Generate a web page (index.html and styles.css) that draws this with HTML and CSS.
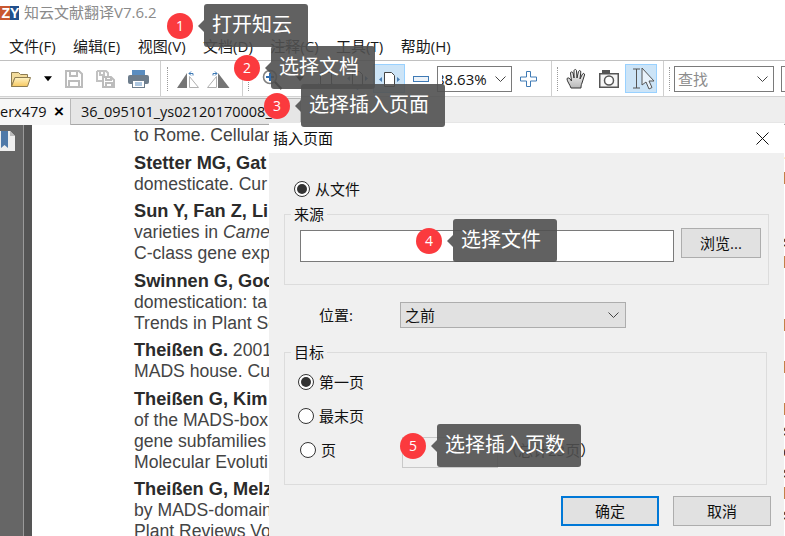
FILE: index.html
```html
<!DOCTYPE html>
<html lang="zh">
<head>
<meta charset="utf-8">
<title>知云文献翻译</title>
<link rel="stylesheet" href="styles.css">
</head>
<body>
<div class="app">
  <header class="titlebar">
    <div class="logo"><span class="logo-z">Z</span><span class="logo-y">Y</span></div>
    <span class="app-title">知云文献翻译V7.6.2</span>
  </header>
  <nav class="menubar">
    <span>文件(F)</span><span>编辑(E)</span><span>视图(V)</span><span>文档(D)</span><span>注释(C)</span><span>工具(T)</span><span>帮助(H)</span>
  </nav>
  <div class="toolbar">
    <div class="group g-file">
      <svg width="20" height="18" viewBox="0 0 20 18"><defs><linearGradient id="fold" x1="0" y1="0" x2="0" y2="1"><stop offset="0" stop-color="#fff3c4"/><stop offset="1" stop-color="#f6c860"/></linearGradient></defs><path d="M.5 2.500h7l2 2h7v3H4L.5 16.500z" fill="#f3dc9c" stroke="#8d7c52"/><path d="M.5 16.500 4 7.500h15.500l-3 9z" fill="url(#fold)" stroke="#8d7c52"/></svg>
      <svg class="caret" width="8" height="6" viewBox="0 0 9 6"><path d="M0 0h9L4.500 5.500z" fill="#000"/></svg>
      <svg width="18" height="18" viewBox="0 0 18 18"><path d="M1 1h13l3 3v13H1zM5 1v5h7V1M4 17v-6h10v6" fill="none" stroke="#bcbcbc" stroke-width="2"/></svg>
      <svg width="19" height="18" viewBox="0 0 19 18"><path d="M1 1h9l2 2v3M1 1v10h5M4 1v4h4V1" fill="none" stroke="#c2c2c2" stroke-width="2"/><path d="M7 7h8l3 3v7H7zM10 7v3h5V7M10 17v-4h6v4" fill="none" stroke="#bcbcbc" stroke-width="2"/></svg>
      <svg width="21" height="19" viewBox="0 0 21 19"><rect x="4" y="1" width="13" height="6" fill="#5a8dc0"/><rect y="6" width="21" height="9" rx="2" fill="#6d7d8c"/><rect x="4.500" y="11.500" width="12" height="7" fill="#fff" stroke="#6d7d8c"/><path d="M7 14h7M7 16h7" stroke="#5a8dc0"/></svg>
    </div>
    <i class="divider d-a"></i><i class="grip"></i>
    <div class="group g-rotate">
      <svg width="26" height="20" viewBox="0 0 26 20"><path d="M11 4v15H1z" fill="#757575"/><path d="M13.500 7.500v11h9z" fill="none" stroke="#b0b0b0"/><path d="M17 4.500h-4M15 2.500l-2 2 2 2M17 4.500v2" fill="none" stroke="#3f7ab5"/></svg>
      <svg width="23" height="20" viewBox="0 0 23 20"><path d="M11 4v15H22.500z" fill="#757575"/><path d="M9.500 7.500v11h-9z" fill="none" stroke="#b0b0b0"/><path d="M6 4.500h4M8 2.500l2 2-2 2M6 4.500v2" fill="none" stroke="#3f7ab5"/></svg>
    </div>
    <i class="divider d-b"></i><i class="grip g-tight"></i>
    <div class="group g-zoom">
      <svg width="20" height="22" viewBox="0 0 20 22"><circle cx="8" cy="9" r="6.500" fill="#fff" stroke="#808080" stroke-width="1.600"/><path d="M8 5v8M4 9h8" stroke="#2f6db0" stroke-width="2"/><path d="M13 14l6.500 7" stroke="#222" stroke-width="2.200"/></svg>
      <svg class="caret" width="8" height="6" viewBox="0 0 9 6"><path d="M0 0h9L4.500 5.500z" fill="#000"/></svg>
      <svg width="15" height="20" viewBox="0 0 15 20"><path d="M2.500 3.500h11v12h-11z" fill="#fff" stroke="#444"/><path d="M0 14v4h4M15 14v4h-4" fill="none" stroke="#5a8dc0"/></svg>
      <svg width="21" height="22" viewBox="0 0 21 22"><path d="M5.500 3.500h7l3 3v11h-10z" fill="#fff" stroke="#444"/><path d="M3 8v5l-3-2.500zM18 8v5l3-2.500zM8 20h5l-2.500 2z" fill="#4a7fb5"/></svg>
    </div>
    <div class="group g-page">
      <span class="tool-on"><svg width="21" height="20" viewBox="0 0 21 20"><path d="M5.500 3.500h7l3 3v11h-10z" fill="#fff" stroke="#444"/><path d="M3 8v5l-3-2.500zM18 8v5l3-2.500z" fill="#4a7fb5"/></svg></span>
      <svg width="16" height="6" viewBox="0 0 16 6"><rect x=".5" y=".5" width="15" height="5" fill="#edf3f9" stroke="#3f7ab5"/></svg>
      <div class="combo zoom-combo"><span class="zoom-clip"><span class="zoom-value">88.63%</span></span><svg class="chev" width="11" height="6" viewBox="0 0 11 6"><path d="M.5.500l5 5 5-5" fill="none" stroke="#444"/></svg></div>
      <svg width="17" height="16" viewBox="0 0 17 16"><path d="M6.500.500h4v5.500h6v4h-6v5.500h-4V10h-6V6h6z" fill="#fff" stroke="#3f7ab5"/></svg>
    </div>
    <i class="divider d-c"></i><i class="grip g-tight"></i>
    <div class="group g-hand">
      <svg width="21" height="21" viewBox="0 0 21 21"><defs><linearGradient id="handfill" x1="0" y1="0" x2="0" y2="1"><stop offset="0" stop-color="#fff"/><stop offset="1" stop-color="#b8b8b8"/></linearGradient></defs><path d="M5 20C4 17 1 13 1 11c0-1.500 2-1.500 3 0l1.500 2L4.500 5c0-1.500 2-1.500 2.500 0L8 10V3c0-2 2.500-2 2.500 0l.5 7 1.500-6.500c.5-1.500 2.500-1 2.300.5L14 11l2.500-5c.7-1.200 2.500-.5 2 1L16 15c-1 2-1 4-1 5z" fill="url(#handfill)" stroke="#333"/></svg>
      <svg width="20" height="18" viewBox="0 0 20 18"><rect x="3" width="8" height="4" fill="#555"/><rect x=".75" y="3.750" width="18.500" height="13.500" fill="#f6f6f6" stroke="#555" stroke-width="1.500"/><circle cx="10" cy="10.500" r="4.500" fill="#fff" stroke="#555" stroke-width="1.500"/></svg>
    </div>
    <span class="tool-on tool-select"><svg width="30" height="27" viewBox="0 0 30 27"><path d="M7 4h7M10.500 4v19M7 23h7" fill="none" stroke="#555"/><path d="M16 3v17l4-3 3 7 3-1.500-3-6.500h5z" fill="#e8f2fb" stroke="#555"/></svg></span>
    <i class="divider d-d"></i><i class="grip g-tight"></i>
    <div class="combo find-combo"><span class="find-text">查找</span><svg class="chev" width="11" height="6" viewBox="0 0 11 6"><path d="M.5.500l5 5 5-5" fill="none" stroke="#444"/></svg></div>
    <div class="combo last-combo"></div>
  </div>
  <div class="tabbar">
    <div class="tab tab-active"><span>erx479</span><b class="tab-close">×</b></div>
    <div class="tab tab-other">36_095101_ys02120170008_w</div>
  </div>
  <main class="workspace">
    <aside class="sidebar">
      <svg width="15" height="20" viewBox="0 0 15 20"><path d="M0 0h10l5 5v15H0z" fill="#eee"/><path d="M10 0l5 5h-5z" fill="#bbb"/><path d="M1 0h7v17l-3.500-3L1 17z" fill="#4f79a8"/></svg>
    </aside>
    <i class="gutter"></i>
    <section class="page">
      <div class="refs">
        <p>to Rome. Cellular</p>
        <p><b>Stetter MG, Gat</b><br>domesticate. Cur</p>
        <p><b>Sun Y, Fan Z, Li</b><br>varieties in <em>Came</em><br>C-class gene exp</p>
        <p><b>Swinnen G, Goo</b><br>domestication: ta<br>Trends in Plant Sc</p>
        <p><b>Theißen G.</b> 2001<br>MADS house. Cu</p>
        <p><b>Theißen G, Kim</b><br>of the MADS-box<br>gene subfamilies<br>Molecular Evoluti</p>
        <p><b>Theißen G, Melz</b><br>by MADS-domain<br>Plant Reviews Vo</p>
      </div>
      <div class="refs-next">·<br>D<br>&nbsp;<br>&nbsp;<br>s<br>E<br>&nbsp;<br>&nbsp;<br>D<br>&nbsp;<br>D<br>&nbsp;<br>D<br>s<br>c<br>s<br>D<br>s</div>
    </section>
  </main>

  <div class="dialog">
    <div class="dlg-title"><span>插入页面</span><svg width="13" height="13" viewBox="0 0 13 13"><path d="M.5.500l12 12M12.500.500l-12 12" stroke="#111" fill="none"/></svg></div>
    <div class="dlg-body">
      <label class="from-file"><i class="radio radio-on"></i>从文件</label>
      <fieldset class="box box-source">
        <legend>来源</legend>
        <div class="source-row">
          <div class="text-input"></div>
          <button class="btn btn-browse">浏览...</button>
        </div>
      </fieldset>
      <div class="pos-row">
        <span class="pos-label">位置:</span>
        <div class="pos-select"><span>之前</span><svg width="11" height="6" viewBox="0 0 11 6"><path d="M.5.500l5 5 5-5" fill="none" stroke="#444"/></svg></div>
      </div>
      <fieldset class="box box-target">
        <legend>目标</legend>
        <div class="opts">
          <label class="opt"><i class="radio radio-on"></i>第一页</label>
          <label class="opt"><i class="radio"></i>最末页</label>
          <label class="opt opt-page"><i class="radio"></i>页<span class="page-input"></span><span class="page-total">（总计23页）</span></label>
        </div>
      </fieldset>
      <div class="actions">
        <button class="btn btn-action btn-primary">确定</button>
        <button class="btn btn-action">取消</button>
      </div>
    </div>
  </div>

  <div class="hint hint-1"><span class="badge">1</span><span class="bubble">打开知云</span></div>
  <div class="hint hint-2"><span class="badge">2</span><span class="bubble">选择文档</span></div>
  <div class="hint hint-3"><span class="badge">3</span><span class="bubble">选择插入页面</span></div>
  <div class="hint hint-4"><span class="badge">4</span><span class="bubble">选择文件</span></div>
  <div class="hint hint-5"><span class="badge">5</span><span class="bubble">选择插入页数</span></div>
</div>
</body>
</html>
```
FILE: styles.css
```css
* { box-sizing: border-box; }
html, body { margin: 0; padding: 0; }
body { background: #fff; color: #111; font: 15px/20px "Open Sans", "Noto Sans CJK SC", sans-serif; }
i { display: block; font-style: normal; }
.app { position: relative; width: 785px; height: 536px; overflow: hidden; display: flex; flex-direction: column; }

.titlebar { height: 33px; display: flex; align-items: flex-start; padding-top: 6px; }
.logo { width: 19px; height: 14px; display: flex; overflow: hidden; font: bold 14px/14px "Liberation Sans", sans-serif; color: #fff; }
.logo-z { width: 10px; background: #c9572f; text-align: right; }
.logo-y { width: 9px; background: #214f8c; text-align: center; }
.app-title { margin: -4px 0 0 5px; font-size: 15px; line-height: 20px; color: #8a8a8a; }

.menubar { height: 28px; display: flex; gap: 17.500px; padding: 3px 0 0 9px; border-bottom: 1px solid #c0c0c0; white-space: nowrap; color: #1a1a1a; }

.toolbar { height: 36px; display: flex; align-items: center; padding-left: 11px; border-bottom: 1px solid #d2d2d2; flex: none; }
.group { display: flex; align-items: center; flex: none; }
.g-file { gap: 13px; }
.g-rotate { gap: 5px; margin-left: 8px; }
.g-zoom { gap: 14px; margin-left: 13px; }
.g-page { gap: 8px; margin-left: 5px; }
.g-hand { gap: 12px; margin-left: 8px; }
.divider { width: 1px; align-self: stretch; background: #cfcfcf; flex: none; }
.d-a { margin-left: 11px; }
.d-b { margin-left: 12px; }
.d-c { margin-left: 14px; }
.d-d { margin-left: 6px; }
.grip { width: 1px; height: 24px; margin-left: 6px; border-left: 1px dotted #9a9a9a; flex: none; }
.g-tight { margin-left: 5px; }
.tool-on { width: 32px; height: 29px; flex: none; display: flex; align-items: center; justify-content: center; background: #cce4f7; border: 1px solid #99d1ff; }
.tool-select { margin-left: 6px; }
.combo { height: 26px; flex: none; display: flex; align-items: center; justify-content: space-between; border: 1px solid #7a7a7a; background: #fff; overflow: hidden; }
.zoom-combo { width: 75px; padding-right: 5px; }
.zoom-clip { display: block; width: 47px; margin-left: 4px; overflow: hidden; white-space: nowrap; }
.zoom-value { display: block; margin-left: -6px; font-size: 15px; color: #111; }
.find-combo { width: 100px; margin-left: 4px; padding: 0 5px 0 3px; }
.find-text { color: #8c8c8c; font-size: 15px; }
.last-combo { width: 30px; margin-left: 7px; }

.tabbar { height: 28px; display: flex; background: #eee; border-bottom: 1px solid #a8a8a8; padding-top: 1px; flex: none; white-space: nowrap; font-size: 14.500px; }
.tab { display: flex; align-items: center; border-top: 1px solid #b8b8b8; border-right: 1px solid #b8b8b8; margin-bottom: -1px; }
.tab-active { width: 71px; background: #f7f7f7; justify-content: space-between; padding-right: 6px; }
.tab-close { font: bold 17px/20px "Liberation Sans", sans-serif; color: #000; }
.tab-other { width: 230px; padding-left: 10px; background: #e6e6e6; border-bottom: 1px solid #a8a8a8; color: #111; }

.workspace { flex: 1; min-height: 0; display: flex; overflow: hidden; }
.sidebar { width: 24px; flex: none; background: #666; border-right: 1px solid #9a9a9a; padding-top: 6px; }
.sidebar svg { display: block; }
.gutter { width: 8px; flex: none; background: #555; }
.page { flex: 1; background: #fff; display: flex; padding-left: 102px; overflow: hidden; }
.refs { width: 649px; flex: none; font: 17.600px/21px "Liberation Sans", sans-serif; color: #444; white-space: nowrap; }
.refs p { margin: 0 0 6.500px; }
.refs b { color: #2b2b2b; font-size: 18.200px; line-height: 0; }
.refs-next { padding-top: 22px; font: 17.300px/21px "Liberation Sans", sans-serif; color: #333; white-space: nowrap; opacity: .99; }

.dialog { position: absolute; left: 269px; top: 122px; width: 515px; height: 414px; background: #f0f0f0; border-top: 1px solid #e6e6e6; color: #111; }
.dlg-title { height: 30px; background: #fff; display: flex; align-items: center; justify-content: space-between; padding: 0 15px 0 4px; }
.dlg-body { padding: 28px 0 0 15px; }
.radio { width: 16px; height: 16px; flex: none; border: 1px solid #333; border-radius: 50%; background: #fff; position: relative; }
.radio-on::after { content: ""; position: absolute; inset: 2px; border-radius: 50%; background: #333; }
.from-file { display: flex; align-items: center; gap: 5px; height: 16px; padding-left: 10px; }
.box { margin: 7px 0 0; padding: 0; border: 1px solid #dcdcdc; min-width: 0; }
.box legend { margin-left: 6px; padding: 0 3px; line-height: 20px; }
.box-source { width: 485px; height: 81px; }
.source-row { display: flex; align-items: flex-start; gap: 7px; padding: 4px 0 0 15px; }
.text-input { width: 374px; height: 32px; margin-top: 2px; background: #fff; border: 1px solid #7a7a7a; }
.btn { display: block; padding: 0; font: inherit; color: #111; background: #e1e1e1; border: 1px solid #adadad; }
.btn-browse { width: 80px; height: 30px; }
.pos-row { display: flex; align-items: center; height: 26px; margin-top: 17px; padding-left: 35px; }
.pos-label { width: 81px; }
.pos-select { width: 226px; height: 26px; display: flex; align-items: center; justify-content: space-between; padding: 0 6px 0 4px; background: #e1e1e1; border: 1px solid #adadad; }
.box-target { width: 483px; height: 143px; margin-top: 14px; }
.opts { padding: 3px 0 0 13px; }
.opt { display: flex; align-items: center; gap: 5px; height: 34px; }
.opt-page { padding-left: 2px; }
.page-input { width: 96px; height: 31px; margin: 4px 0 0 61px; border: 1px solid #c9c9c9; background: #f0f0f0; flex: none; }
.page-total { margin-left: 0; }
.actions { display: flex; justify-content: flex-end; gap: 14px; padding-right: 13px; margin-top: 11px; }
.btn-action { width: 98px; height: 30px; }
.btn-primary { border: 2px solid #0078d7; }

.hint { position: absolute; display: flex; align-items: center; height: 43px; }
.hint-1 { left: 167px; top: 4px; }
.hint-2 { left: 234px; top: 46px; }
.hint-3 { left: 264px; top: 84px; }
.hint-4 { left: 416px; top: 219px; }
.hint-5 { left: 400px; top: 424px; }
.badge { width: 26px; height: 26px; flex: none; border-radius: 50%; background: #fb3a3e; color: #fff; font-size: 14px; line-height: 26px; text-align: center; }
.bubble { position: relative; height: 43px; margin-left: 11px; padding: 0 16px 0 8px; background: rgba(80, 80, 80, .9); border-radius: 3px; color: #fff; font-size: 20px; line-height: 42px; white-space: nowrap; }
.bubble::before { content: ""; position: absolute; left: -6px; top: 50%; margin-top: -6px; border: 6px solid transparent; border-left-width: 0; border-right-color: rgba(80, 80, 80, .9); }
```
